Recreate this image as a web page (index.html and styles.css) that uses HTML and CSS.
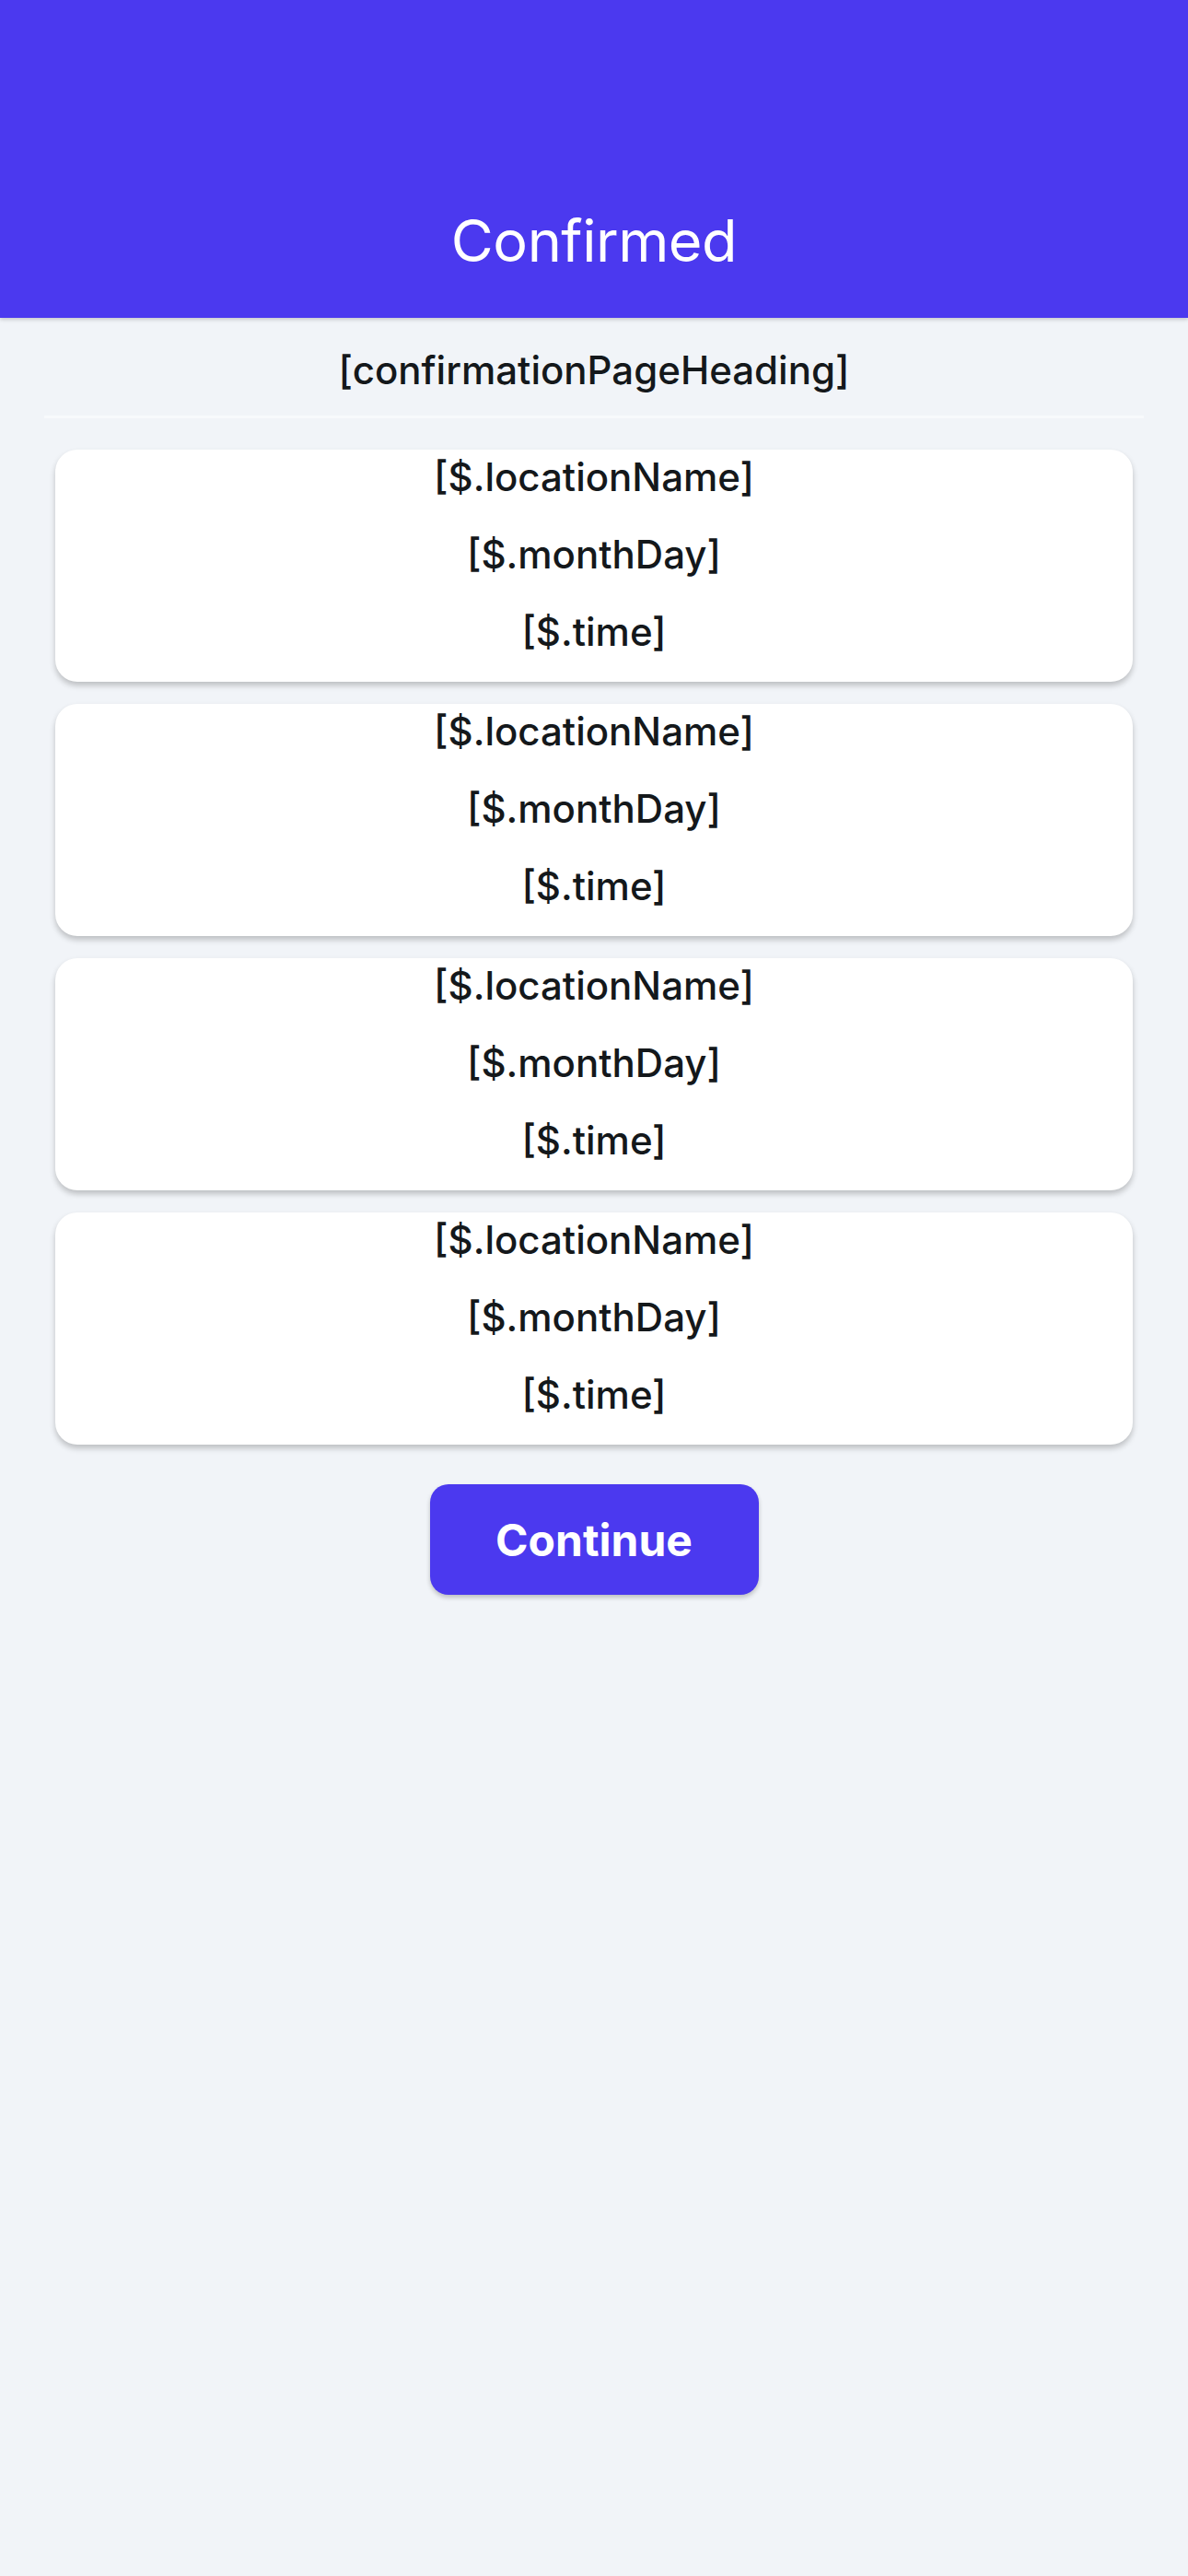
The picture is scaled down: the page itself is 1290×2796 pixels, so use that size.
FILE: index.html
```html
<!DOCTYPE html>
<html lang="en">
<head>
  <meta charset="UTF-8">
  <title>Confirmed</title>
  <meta name="viewport" content="width=device-width,initial-scale=1">
  <link rel="stylesheet" href="styles.css">
</head>
<body>
  <header class="app-bar">
    <h1 class="app-title">Confirmed</h1>
  </header>
  <main class="page">
    <div class="page-heading">[confirmationPageHeading]</div>
    <div class="divider"></div>
    <div class="booking-list">
      <div class="booking-card">
        <p class="booking-line">[$.locationName]</p>
        <p class="booking-line">[$.monthDay]</p>
        <p class="booking-line">[$.time]</p>
      </div>
      <div class="booking-card">
        <p class="booking-line">[$.locationName]</p>
        <p class="booking-line">[$.monthDay]</p>
        <p class="booking-line">[$.time]</p>
      </div>
      <div class="booking-card">
        <p class="booking-line">[$.locationName]</p>
        <p class="booking-line">[$.monthDay]</p>
        <p class="booking-line">[$.time]</p>
      </div>
      <div class="booking-card">
        <p class="booking-line">[$.locationName]</p>
        <p class="booking-line">[$.monthDay]</p>
        <p class="booking-line">[$.time]</p>
      </div>
    </div>
    <div class="actions">
      <button class="continue-btn" type="button">Continue</button>
    </div>
  </main>
</body>
</html>
```

FILE: styles.css
```css
html, body {
  margin: 0;
  padding: 0;
  font-family: 'Inter', 'Lato', sans-serif;
  background: #f1f4f8;
  color: #14181b;
}
body {
  min-height: 100vh;
}

.app-bar {
  height: 345px;
  box-sizing: border-box;
  background: #4b39ef;
  display: flex;
  align-items: flex-end;
  justify-content: center;
  padding-bottom: 45px;
  box-shadow: 0 2px 4px rgba(0, 0, 0, 0.18);
  position: relative;
  z-index: 1;
}
.app-title {
  margin: 0;
  color: #fff;
  font-size: 63px;
  font-weight: 400;
  line-height: 77px;
  letter-spacing: -0.5px;
}

.page {
  padding: 32px 48px 40px;
}
.page-heading {
  text-align: center;
  font-size: 42px;
  font-weight: 500;
  line-height: 50px;
  margin-bottom: 24px;
}
.divider {
  height: 3px;
  background: #f8fafc;
  margin-bottom: 34px;
}

.booking-list {
  display: flex;
  flex-direction: column;
  gap: 24px;
  padding: 0 12px;
}
.booking-card {
  background: #fff;
  border-radius: 24px;
  padding: 0 0 24px;
  box-shadow: 0 4px 6px rgba(0, 0, 0, 0.22);
}
.booking-line {
  margin: 0 0 24px;
  text-align: center;
  font-size: 42px;
  font-weight: 500;
  line-height: 60px;
}
.booking-line:last-child {
  margin-bottom: 0;
}

.actions {
  display: flex;
  justify-content: center;
  margin-top: 43px;
}
.continue-btn {
  width: 357px;
  height: 120px;
  border: none;
  border-radius: 20px;
  background: #4b39ef;
  color: #fff;
  font-family: inherit;
  font-size: 48px;
  font-weight: 700;
  cursor: pointer;
  box-shadow: 0 3px 5px rgba(0, 0, 0, 0.22);
}
```
